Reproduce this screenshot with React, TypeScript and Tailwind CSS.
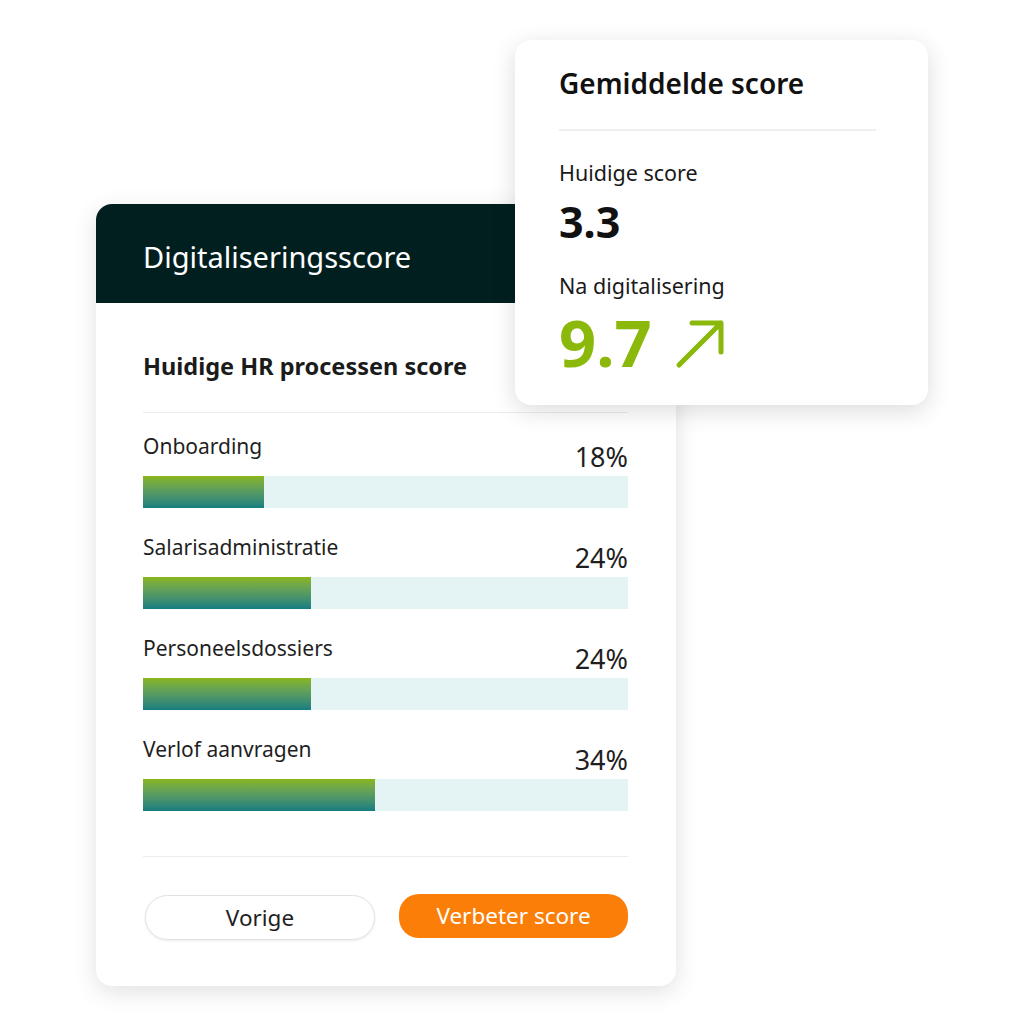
import React from "react";

const rows = [
  { label: "Onboarding", pct: "18%", w: 121 },
  { label: "Salarisadministratie", pct: "24%", w: 168 },
  { label: "Personeelsdossiers", pct: "24%", w: 168 },
  { label: "Verlof aanvragen", pct: "34%", w: 232 },
];

export default function App() {
  return (
    <div
      className="relative w-[1024px] h-[1024px] bg-white overflow-hidden"
      style={{ fontFamily: '"Noto Sans", "Open Sans", sans-serif' }}
    >
      <div className="pt-[204px] pl-[96px]">
        <div className="w-[580px] h-[782px] rounded-2xl bg-white shadow-[0_6px_24px_rgba(0,0,0,0.12)] overflow-hidden flex flex-col">
          <div className="h-[99px] bg-[#021f20] flex items-center pl-[47px] pt-[6px]">
            <span className="text-white text-[29px] leading-none">Digitaliseringsscore</span>
          </div>
          <div className="px-[47px] pr-[48px] flex flex-col">
            <div className="h-[110px] border-b border-[#ececec] flex items-center pt-[18px]">
              <span className="text-[#1b1b1b] text-[23.5px] font-bold">Huidige HR processen score</span>
            </div>
            <div className="flex flex-col pt-[20px] gap-[26px] pb-[45px] border-b border-[#ececec]">
              {rows.map((r) => (
                <div key={r.label} className="flex flex-col">
                  <div className="flex justify-between items-start h-[43px]">
                    <span className="text-[#1f1f1f] text-[21px] leading-[26px]">{r.label}</span>
                    <span className="text-[#1f1f1f] text-[27px] leading-[30px] mt-[9px]">{r.pct}</span>
                  </div>
                  <div className="h-[32px] bg-[#e4f4f4]">
                    <div
                      className="h-full bg-gradient-to-b from-[#89b611] to-[#137d80]"
                      style={{ width: r.w }}
                    />
                  </div>
                </div>
              ))}
            </div>
            <div className="flex justify-between pt-[38px] pl-[2px]">
              <button className="w-[230px] h-[45px] rounded-full bg-white border border-[#e2e2e2] shadow-[0_1px_3px_rgba(0,0,0,0.08)] text-[#1f1f1f] text-[22.5px]">
                Vorige
              </button>
              <button className="w-[229px] h-[44px] rounded-[20px] bg-[#fb7e08] text-white text-[22.5px] mt-[-1px]">
                Verbeter score
              </button>
            </div>
          </div>
        </div>
      </div>

      <div className="absolute left-[515px] top-[40px] w-[413px] h-[365px] rounded-2xl bg-white shadow-[0_6px_24px_rgba(0,0,0,0.14)] pl-[44px] pr-[52px] flex flex-col">
        <div className="h-[91px] border-b-2 border-[#efefef] flex items-center pb-[3px]">
          <span className="text-[#111] text-[28px] font-semibold leading-none">Gemiddelde score</span>
        </div>
        <div className="pt-[29px] text-[#1a1a1a] text-[21.5px] leading-[26px]">Huidige score</div>
        <div className="text-[#111] text-[43px] font-bold leading-[48px] mt-[12px]">3.3</div>
        <div className="mt-[27px] text-[#1a1a1a] text-[21.5px] leading-[26px]">Na digitalisering</div>
        <div className="flex items-center gap-[23px] mt-[8px] h-[70px]">
          <span className="text-[#8ab80b] text-[65px] font-bold leading-[70px]">9.7</span>
          <svg width="52" height="52" viewBox="0 0 52 52" fill="none" className="mt-[2px]">
            <path d="M4 48 L46 6 M17 6 H46 V35" stroke="#8ab80b" strokeWidth="5" strokeLinecap="round" strokeLinejoin="round" />
          </svg>
        </div>
      </div>
    </div>
  );
}
